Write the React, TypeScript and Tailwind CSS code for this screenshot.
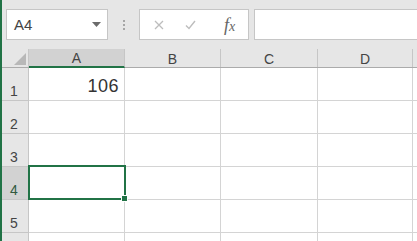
import React from "react";

const cols = ["A", "B", "C", "D", ""];
const colW = [96, 96, 97, 95, 60];
const rows = ["1", "2", "3", "4", "5", ""];

export default function App() {
  const font = { fontFamily: '"Liberation Sans", Arial, sans-serif' };
  return (
    <div className="flex w-[417px] h-[241px] overflow-hidden bg-[#e6e6e6]" style={font}>
      <div className="w-[2px] shrink-0 bg-[#217346]" />
      <div className="flex-1 flex flex-col min-w-0">
        {/* Formula bar */}
        <div className="h-[49px] shrink-0 flex items-start pt-[9px] pl-[4px]">
          <div className="w-[102px] h-[31px] shrink-0 bg-white border border-[#c6c6c6] flex items-center justify-between pl-[7px] pr-[6px]">
            <span className="text-[15px] text-[#444444] leading-none">A4</span>
            <svg width="9" height="5" viewBox="0 0 9 5"><path d="M0 0h9L4.5 5z" fill="#6b6b6b" /></svg>
          </div>
          <div className="w-[31px] shrink-0 h-[31px] flex flex-col items-center justify-center gap-[2px] pl-[1px]">
            <div className="w-[2px] h-[2px] bg-[#a6a6a6]" />
            <div className="w-[2px] h-[2px] bg-[#a6a6a6]" />
            <div className="w-[2px] h-[2px] bg-[#a6a6a6]" />
          </div>
          <div className="w-[110px] h-[31px] shrink-0 bg-white border border-[#c6c6c6] flex items-center">
            <svg className="ml-[14px]" width="10" height="10" viewBox="0 0 10 10"><path d="M1 1L9 9M9 1L1 9" stroke="#bdbdbd" strokeWidth="1.3" /></svg>
            <svg className="ml-[21px]" width="11" height="10" viewBox="0 0 11 10"><path d="M1 5.5L4 8.5L10 1" stroke="#bdbdbd" strokeWidth="1.4" fill="none" /></svg>
            <span className="ml-[28px] text-[#666] italic text-[18px] leading-none" style={{ fontFamily: '"Liberation Serif", "Times New Roman", serif' }}>
              f<span className="text-[14px]">x</span>
            </span>
          </div>
          <div className="flex-1 ml-[5px] h-[31px] bg-white border border-[#c6c6c6] border-r-0" />
        </div>
        {/* Column headers */}
        <div className="h-[19px] shrink-0 flex border-b border-[#ababab]">
          <div className="w-[27px] shrink-0 relative border-r border-[#c6c6c6]">
            <svg className="absolute right-[2px] bottom-[2px]" width="12" height="12" viewBox="0 0 12 12"><path d="M12 0V12H0z" fill="#b8b8b8" /></svg>
          </div>
          {cols.map((c, i) => (
            <div
              key={i}
              style={{ width: colW[i] }}
              className={
                "shrink-0 flex items-end justify-center pb-[1px] text-[14px] leading-none text-[#444] border-r border-[#c6c6c6] " +
                (i === 0 ? "bg-[#d2d2d2] border-b-2 border-b-[#217346] -mb-[1px]" : "")
              }
            >
              {c}
            </div>
          ))}
        </div>
        {/* Rows */}
        {rows.map((r, ri) => (
          <div key={ri} className="h-[33px] shrink-0 flex">
            <div
              className={
                "w-[27px] shrink-0 border-b border-r border-[#c6c6c6] flex items-end pl-[8px] pb-[2px] text-[14px] leading-none " +
                (r === "4" ? "bg-[#d2d2d2] text-[#31593f]" : "bg-[#e6e6e6] text-[#444]")
              }
            >
              {r}
            </div>
            {cols.map((c, i) => (
              <div
                key={i}
                style={{ width: colW[i] }}
                className="shrink-0 bg-white border-b border-r border-[#d4d4d4] relative"
              >
                {r === "1" && i === 0 && (
                  <span className="absolute right-[5px] top-[9px] text-[18px] leading-none text-[#333] tracking-[0.5px]">106</span>
                )}
                {r === "4" && i === 0 && (
                  <div className="absolute -left-[1px] -top-[2px] w-[98px] h-[35px] border-2 border-[#217346] z-10">
                    <div className="absolute -right-[4px] -bottom-[4px] w-[5px] h-[5px] bg-[#217346] border border-white box-content" />
                  </div>
                )}
              </div>
            ))}
          </div>
        ))}
      </div>
    </div>
  );
}
